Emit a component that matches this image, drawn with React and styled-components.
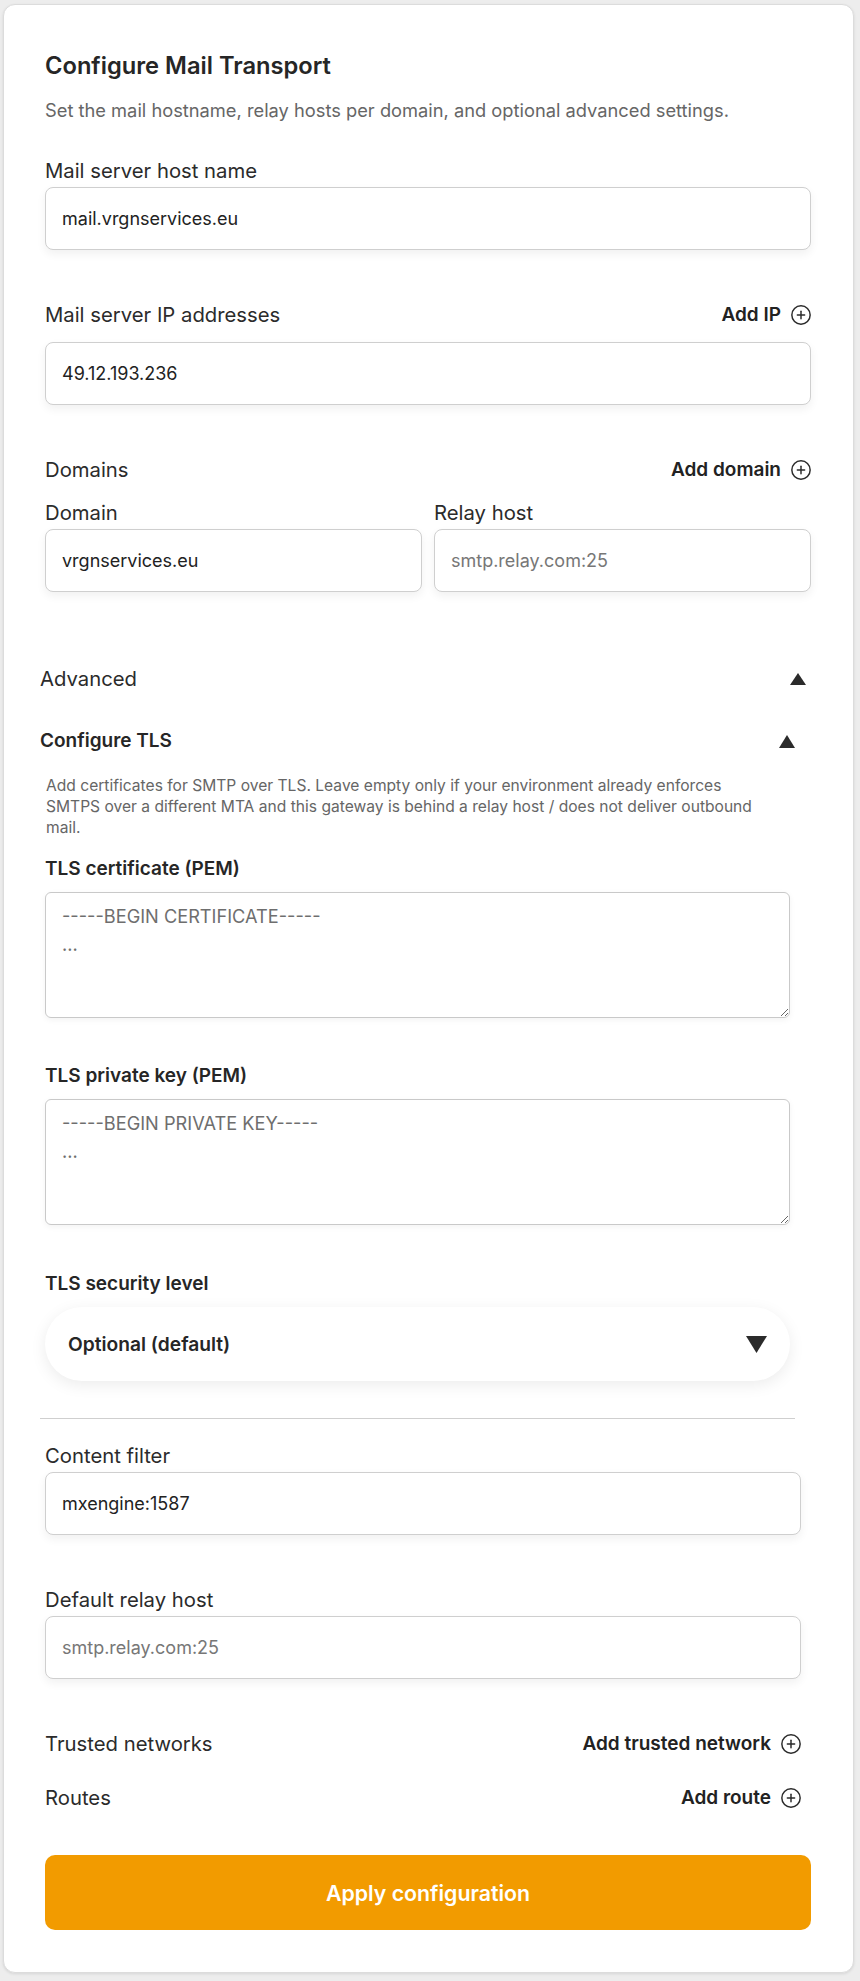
import React, { useState } from "react";
import styled, { createGlobalStyle } from "styled-components";
import { CirclePlus } from "lucide-react";

const GlobalStyle = createGlobalStyle`
  * {
    box-sizing: border-box;
  }
  body {
    margin: 0;
    background: #ededed;
    font-family: Inter, "Noto Sans", "Liberation Sans", sans-serif;
    color: #2b2b2b;
  }
`;

const Caret = ({ up, w, h }) => (
  <CaretSvg width={w} height={h} viewBox={`0 0 ${w} ${h}`}>
    <polygon
      points={up ? `${w / 2},0 ${w},${h} 0,${h}` : `0,0 ${w},0 ${w / 2},${h}`}
    />
  </CaretSvg>
);

const PlusIcon = () => <CirclePlus size={22} strokeWidth={1.6} />;

const App = () => {
  const [advancedOpen, setAdvancedOpen] = useState(true);
  const [tlsOpen, setTlsOpen] = useState(true);

  return (
    <>
      <GlobalStyle />
      <Page>
        <Card>
          <Title>Configure Mail Transport</Title>
          <Subtitle>
            Set the mail hostname, relay hosts per domain, and optional advanced
            settings.
          </Subtitle>

          <Field $top={37}>
            <Label>Mail server host name</Label>
            <Input defaultValue="mail.vrgnservices.eu" />
          </Field>

          <Field $top={53}>
            <HeaderRow $bottom={15}>
              <RowTitle>Mail server IP addresses</RowTitle>
              <AddButton $inset={-1}>
                Add IP <PlusIcon />
              </AddButton>
            </HeaderRow>
            <Input defaultValue="49.12.193.236" />
          </Field>

          <Field $top={53}>
            <HeaderRow $bottom={19}>
              <RowTitle>Domains</RowTitle>
              <AddButton $inset={-1}>
                Add domain <PlusIcon />
              </AddButton>
            </HeaderRow>
            <DomainGrid>
              <div>
                <Label>Domain</Label>
                <Input defaultValue="vrgnservices.eu" />
              </div>
              <div>
                <Label>Relay host</Label>
                <Input placeholder="smtp.relay.com:25" />
              </div>
            </DomainGrid>
          </Field>

          <Advanced>
            <AdvancedHeader onClick={() => setAdvancedOpen(!advancedOpen)}>
              <span>Advanced</span>
              <Caret up={advancedOpen} w={16} h={12} />
            </AdvancedHeader>

            {advancedOpen && (
              <>
                <TlsSection>
                  <TlsHeader onClick={() => setTlsOpen(!tlsOpen)}>
                    <span>Configure TLS</span>
                    <Caret up={tlsOpen} w={16} h={13} />
                  </TlsHeader>
                  {tlsOpen && (
                    <TlsBody>
                      <Hint>
                        Add certificates for SMTP over TLS. Leave empty only if
                        your environment already enforces SMTPS over a different
                        MTA and this gateway is behind a relay host / does not
                        deliver outbound mail.
                      </Hint>
                      <StrongLabel $top={20}>TLS certificate (PEM)</StrongLabel>
                      <PemArea placeholder={"-----BEGIN CERTIFICATE-----\n..."} />
                      <StrongLabel $top={47}>TLS private key (PEM)</StrongLabel>
                      <PemArea placeholder={"-----BEGIN PRIVATE KEY-----\n..."} />
                      <StrongLabel $top={48}>TLS security level</StrongLabel>
                      <SelectPill type="button">
                        <span>Optional (default)</span>
                        <Caret w={21} h={17} />
                      </SelectPill>
                    </TlsBody>
                  )}
                </TlsSection>

                <AdvancedBody>
                  <Field $top={25}>
                    <Label>Content filter</Label>
                    <Input defaultValue="mxengine:1587" />
                  </Field>
                  <Field $top={53}>
                    <Label>Default relay host</Label>
                    <Input placeholder="smtp.relay.com:25" />
                  </Field>
                  <HeaderRow $top={53}>
                    <RowTitle>Trusted networks</RowTitle>
                    <AddButton $inset={-1}>
                      Add trusted network <PlusIcon />
                    </AddButton>
                  </HeaderRow>
                  <HeaderRow $top={30}>
                    <RowTitle>Routes</RowTitle>
                    <AddButton $inset={-1}>
                      Add route <PlusIcon />
                    </AddButton>
                  </HeaderRow>
                </AdvancedBody>
              </>
            )}
          </Advanced>

          <ApplyButton type="button">Apply configuration</ApplyButton>
        </Card>
      </Page>
    </>
  );
};

export default App;

const Page = styled.div`
  padding: 4px 6px 7px 3px;
`;

const Card = styled.div`
  background: #fff;
  border: 1px solid #dcdcdc;
  border-radius: 12px;
  box-shadow: 0 1px 3px rgba(0, 0, 0, 0.1);
  padding: 46px 42px 42px 41px;
`;

const Title = styled.h2`
  margin: 0;
  font-size: 23.7px;
  line-height: 30px;
  font-weight: 600;
  color: #262626;
`;

const Subtitle = styled.p`
  margin: 17px 0 0;
  font-size: 18.3px;
  line-height: 24px;
  color: #666;
`;

const Field = styled.div`
  margin-top: ${(p) => p.$top || 0}px;
`;

const Label = styled.label`
  display: block;
  font-size: 20.3px;
  line-height: 24px;
  margin-bottom: 4px;
  color: #2b2b2b;
`;

const HeaderRow = styled.div`
  display: flex;
  justify-content: space-between;
  align-items: center;
  height: 24px;
  margin-top: ${(p) => p.$top || 0}px;
  margin-bottom: ${(p) => p.$bottom || 0}px;
`;

const RowTitle = styled.span`
  font-size: 20.3px;
  line-height: 24px;
  color: #2b2b2b;
`;

const AddButton = styled.button`
  display: inline-flex;
  align-items: center;
  gap: 9px;
  padding: 0;
  margin-right: ${(p) => p.$inset}px;
  border: none;
  background: none;
  font-family: inherit;
  font-size: 19px;
  line-height: 24px;
  font-weight: 600;
  color: #222;
  cursor: pointer;
  svg {
    display: block;
    color: #2b2b2b;
  }
`;

const Input = styled.input`
  display: block;
  width: 100%;
  height: 63px;
  padding: 0 16px;
  border: 1px solid #cfcfcf;
  border-radius: 8px;
  background: #fff;
  box-shadow: 0 4px 10px rgba(0, 0, 0, 0.06);
  font-family: inherit;
  font-size: 18px;
  color: #222;
  outline: none;
  &::placeholder {
    color: #777;
  }
`;

const DomainGrid = styled.div`
  display: grid;
  grid-template-columns: 1fr 1fr;
  gap: 12px;
`;

const Advanced = styled.section`
  margin: 75px 0 0 -5px;
`;

const AdvancedHeader = styled.div`
  display: flex;
  justify-content: space-between;
  align-items: center;
  height: 24px;
  padding-right: 5px;
  font-size: 20.3px;
  line-height: 24px;
  color: #2b2b2b;
  cursor: pointer;
`;

const CaretSvg = styled.svg`
  display: block;
  fill: #2b2b2b;
  flex-shrink: 0;
`;

const TlsSection = styled.div`
  margin: 39px 16px 0 0;
  padding-bottom: 37px;
  border-bottom: 1px solid #cfcfcf;
`;

const TlsHeader = styled.div`
  display: flex;
  justify-content: space-between;
  align-items: center;
  height: 22px;
  font-size: 19px;
  line-height: 22px;
  font-weight: 600;
  color: #262626;
  cursor: pointer;
`;

const TlsBody = styled.div`
  padding: 0 5px;
`;

const Hint = styled.p`
  margin: 23px 0 0;
  padding: 0 16px 0 1px;
  font-size: 15.6px;
  line-height: 21px;
  color: #666;
`;

const StrongLabel = styled.label`
  display: block;
  margin: ${(p) => p.$top}px 0 12px;
  font-size: 19px;
  line-height: 22px;
  font-weight: 600;
  color: #262626;
`;

const PemArea = styled.textarea`
  display: block;
  width: 100%;
  height: 126px;
  padding: 9px 16px;
  border: 1px solid #c9c9c9;
  border-radius: 6px;
  box-shadow: 0 2px 6px rgba(0, 0, 0, 0.05);
  font-family: inherit;
  font-size: 18.2px;
  line-height: 28px;
  color: #222;
  resize: vertical;
  outline: none;
  &::placeholder {
    color: #6e6e6e;
  }
`;

const SelectPill = styled.button`
  display: flex;
  width: 100%;
  height: 74px;
  align-items: center;
  justify-content: space-between;
  padding: 0 23px;
  border: none;
  border-radius: 37px;
  background: #fff;
  box-shadow: 0 4px 16px rgba(0, 0, 0, 0.08);
  font-family: inherit;
  font-size: 19.2px;
  font-weight: 600;
  color: #262626;
  cursor: pointer;
`;

const AdvancedBody = styled.div`
  padding: 0 10px 0 5px;
`;

const ApplyButton = styled.button`
  display: block;
  width: 100%;
  height: 75px;
  margin-top: 45px;
  border: none;
  border-radius: 10px;
  background: #f29b00;
  color: #fff;
  font-family: inherit;
  font-size: 21.3px;
  font-weight: 600;
  cursor: pointer;
`;
